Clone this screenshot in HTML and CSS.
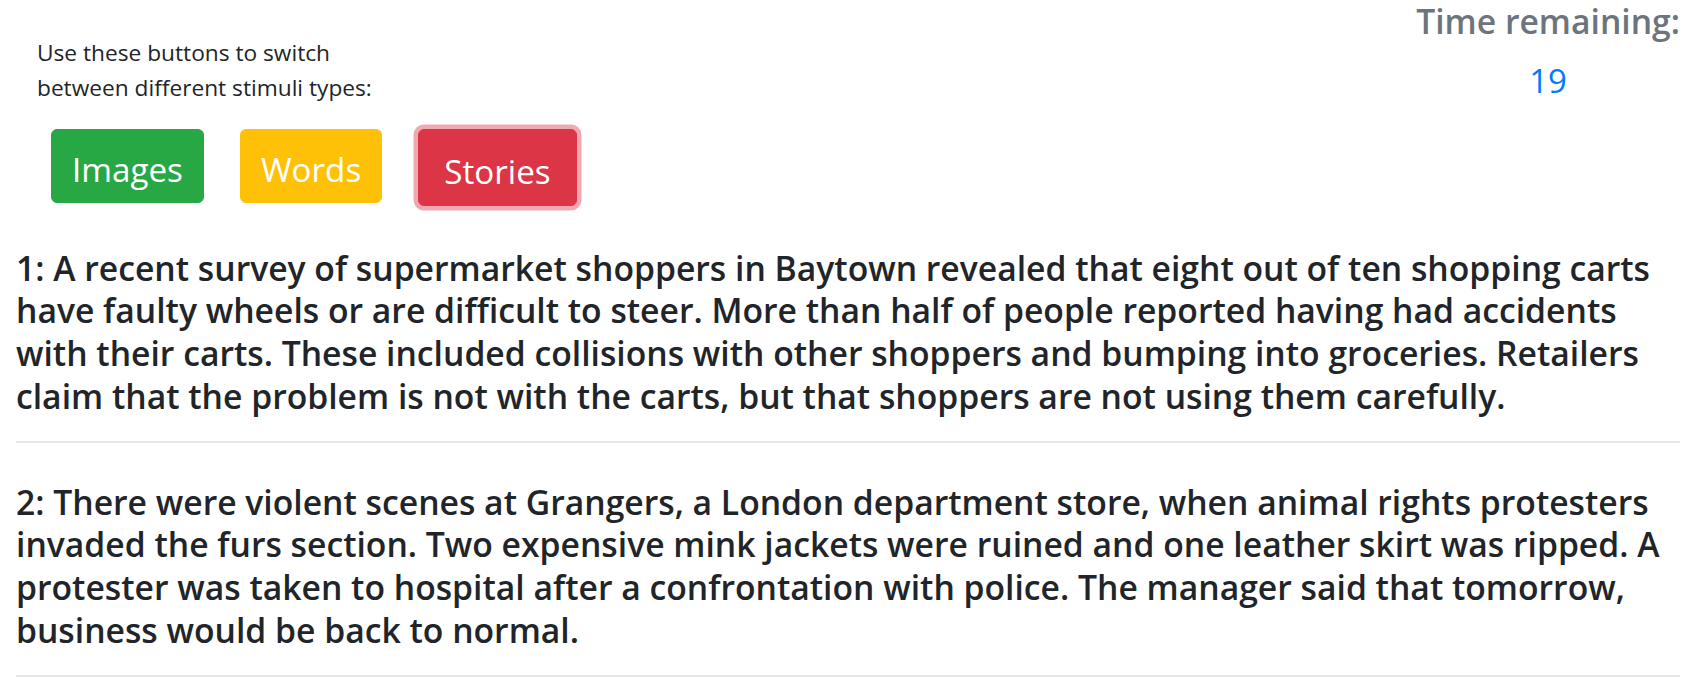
FILE: index.html
```html
<!DOCTYPE html>
<html lang="en">
<head>
<meta charset="utf-8">
<title>Stimuli</title>
<link rel="stylesheet" href="styles.css">
</head>
<body>
<div class="page">
  <header class="top">
    <section class="controls">
      <p class="intro">Use these buttons to switch between different stimuli types:</p>
      <div class="buttons">
        <button class="btn btn-images" type="button">Images</button>
        <button class="btn btn-words" type="button">Words</button>
        <button class="btn btn-stories" type="button">Stories</button>
      </div>
    </section>
    <section class="timer">
      <h3 class="timer-label">Time remaining:</h3>
      <div class="timer-count">19</div>
    </section>
  </header>
  <main class="stories">
    <article class="story">
      <h3 class="story-text">1: A recent survey of supermarket shoppers in Baytown revealed that eight out of ten shopping carts have faulty wheels or are difficult to steer. More than half of people reported having had accidents with their carts. These included collisions with other shoppers and bumping into groceries. Retailers claim that the problem is not with the carts, but that shoppers are not using them carefully.</h3>
      <hr class="divider">
    </article>
    <article class="story">
      <h3 class="story-text">2: There were violent scenes at Grangers, a London department store, when animal rights protesters invaded the furs section. Two expensive mink jackets were ruined and one leather skirt was ripped. A protester was taken to hospital after a confrontation with police. The manager said that tomorrow, business would be back to normal.</h3>
      <hr class="divider">
    </article>
  </main>
</div>
</body>
</html>
```
FILE: styles.css
```css
html, body {
  margin: 0;
  padding: 0;
  background: #ffffff;
}

body {
  font-family: "Open Sans", "Noto Sans", sans-serif;
  color: #212529;
}

.page {
  padding: 0 12px 0 16px;
}

.top {
  display: flex;
  justify-content: space-between;
  align-items: flex-start;
}

.controls {
  padding-top: 35px;
}

.intro {
  width: 360px;
  margin: 0 0 0 21px;
  font-size: 22.7px;
  line-height: 35.3px;
  font-weight: 400;
}

.buttons {
  display: flex;
  align-items: flex-start;
  gap: 36px;
  margin: 23px 0 0 35px;
}

.btn {
  font-family: "Open Sans", "Noto Sans", sans-serif;
  font-size: 33.2px;
  line-height: 52px;
  font-weight: 400;
  color: #ffffff;
  padding: 14px 20px 6px;
  border: 1px solid transparent;
  border-radius: 6px;
  cursor: pointer;
}

.btn-images {
  background: #28a745;
  border-color: #28a745;
}

.btn-words {
  background: #ffc107;
  border-color: #ffc107;
}

.btn-stories {
  background: #dc3545;
  border-color: #dc3545;
  padding: 16px 25px 7px;
  box-shadow: 0 0 0 4.5px rgba(225, 83, 97, 0.5);
}

.timer {
  text-align: center;
}

.timer-label {
  margin: 0;
  font-size: 33.7px;
  line-height: 42.75px;
  font-weight: 600;
  color: #6c757d;
}

.timer-count {
  margin-top: 17px;
  font-size: 33px;
  line-height: 42px;
  font-weight: 400;
  color: #007bff;
}

.stories {
  padding-top: 41px;
}

.story + .story {
  margin-top: 38px;
}

.story-text {
  margin: 0;
  font-size: 33.7px;
  line-height: 42.75px;
  font-weight: 600;
  color: #212529;
}

.divider {
  margin: 23px 0 0;
  border: 0;
  border-top: 2px solid #e6e6e6;
  height: 0;
}
```
